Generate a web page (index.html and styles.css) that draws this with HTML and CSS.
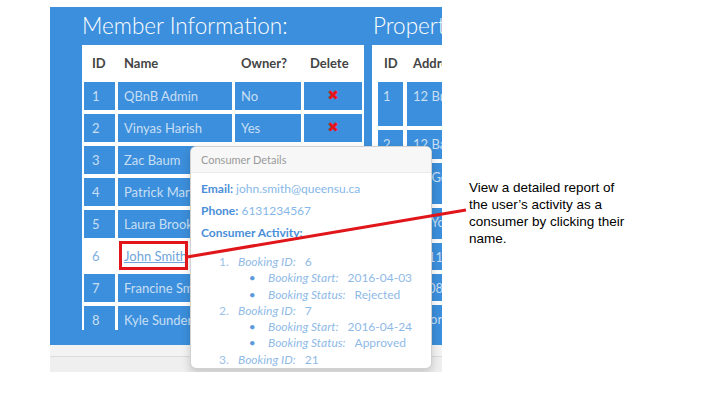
FILE: index.html
```html
<!DOCTYPE html>
<html>
<head>
<meta charset="utf-8">
<link rel="stylesheet" href="styles.css">
</head>
<body>
<div class="slide">
  <div class="shot">
    <div class="app">
      <section class="members">
        <h2 class="title">Member Information:</h2>
        <div class="panel">
          <div class="grid mgrid">
            <div class="th">ID</div><div class="th">Name</div><div class="th">Owner?</div><div class="th">Delete</div>
            <div class="td">1</div><div class="td">QBnB Admin</div><div class="td">No</div><div class="td del">&#10006;</div>
            <div class="td">2</div><div class="td">Vinyas Harish</div><div class="td">Yes</div><div class="td del">&#10006;</div>
            <div class="td">3</div><div class="td">Zac Baum</div><div class="td">No</div><div class="td del">&#10006;</div>
            <div class="td">4</div><div class="td">Patrick Martin</div><div class="td">No</div><div class="td del">&#10006;</div>
            <div class="td">5</div><div class="td">Laura Brooks</div><div class="td">No</div><div class="td del">&#10006;</div>
            <div class="td plain">6</div><div class="td plain"><a class="name-link" href="#">John Smith</a></div><div class="td plain">No</div><div class="td plain"></div>
            <div class="td">7</div><div class="td">Francine Smith</div><div class="td">No</div><div class="td del">&#10006;</div>
            <div class="td">8</div><div class="td">Kyle Sunderland</div><div class="td">No</div><div class="td del">&#10006;</div>
          </div>
        </div>
      </section>
      <section class="props">
        <h2 class="title">Property Information:</h2>
        <div class="panel ppanel">
          <div class="grid pgrid">
            <div class="th">ID</div><div class="th">Address</div>
            <div class="td">1</div><div class="td">12 Brock St Kingston ON</div>
            <div class="td">2</div><div class="td">12 Barrie St</div>
            <div class="td">3</div><div class="td">21 George St Kingston</div>
            <div class="td">4</div><div class="td">19 York St</div>
            <div class="td">5</div><div class="td">2011 Union St</div>
            <div class="td">6</div><div class="td">2008 Alfred St</div>
            <div class="td">7</div><div class="td">4 Lorne St</div>
          </div>
        </div>
      </section>
    </div>
    <div class="footer">
      <div class="footer-top"></div>
      <div class="footer-bottom"></div>
    </div>

    <div class="popover">
      <div class="pop-title">Consumer Details</div>
      <div class="pop-body">
        <p class="pop-line"><b>Email:</b> <span class="pop-val">john.smith@queensu.ca</span></p>
        <p class="pop-line"><b>Phone:</b> <span class="pop-val">6131234567</span></p>
        <p class="pop-line"><b>Consumer Activity:</b></p>
        <ol class="acts">
          <li><em>Booking ID:</em><span class="v">6</span>
            <ul>
              <li><em>Booking Start:</em><span class="v">2016-04-03</span></li>
              <li><em>Booking Status:</em><span class="v">Rejected</span></li>
            </ul>
          </li>
          <li><em>Booking ID:</em><span class="v">7</span>
            <ul>
              <li><em>Booking Start:</em><span class="v">2016-04-24</span></li>
              <li><em>Booking Status:</em><span class="v">Approved</span></li>
            </ul>
          </li>
          <li><em>Booking ID:</em><span class="v">21</span>
            <ul>
              <li><em>Booking Start:</em><span class="v">2016-05-02</span></li>
            </ul>
          </li>
        </ol>
      </div>
    </div>
  </div>

  <div class="callout-box"></div>
  <svg class="callout-line" width="720" height="405" viewBox="0 0 720 405">
    <line x1="187" y1="257" x2="466" y2="210" stroke="#e0161b" stroke-width="3"/>
  </svg>
  <p class="note">View a detailed report of<br>the user’s activity as a<br>consumer by clicking their<br>name.</p>
</div>
</body>
</html>
```
FILE: styles.css
```css
* { box-sizing: border-box; }
html, body { margin: 0; padding: 0; background: #fff; }
body { font-family: Lato, "Open Sans", sans-serif; }

.slide {
  position: relative;
  width: 720px;
  height: 405px;
  overflow: hidden;
  background: #fff;
  padding-top: 7px;
}

.shot {
  position: relative;
  margin-left: 50px;
  width: 392px;
  height: 365px;
  overflow: hidden;
}

.app {
  display: flex;
  gap: 8px;
  height: 338px;
  padding-left: 32px;
  background: #3c8fdc;
  overflow: hidden;
}

.members { flex: 0 0 282px; }
.props { flex: 0 0 220px; }

.title {
  margin: 0;
  height: 38px;
  line-height: 38px;
  font-size: 22.5px;
  font-weight: 300;
  color: #fff;
  white-space: nowrap;
}
.props .title { padding-left: 1px; }

.panel {
  height: 285px;
  overflow: hidden;
  background: #fff;
  padding: 2px;
}
.ppanel { padding: 2px 0 2px 6px; }

.grid {
  display: grid;
  row-gap: 4px;
  font-size: 13px;
}
.mgrid {
  grid-template-columns: 31px 114px 66px 58px;
  grid-template-rows: 31px repeat(8, 28px);
  column-gap: 3px;
}
.pgrid {
  grid-template-columns: 25px 160px;
  grid-template-rows: 31px 44px 29px 41px 31px 27px 27px 26px;
  column-gap: 4px;
}

.th {
  display: flex;
  align-items: center;
  padding-left: 6px;
  font-weight: 700;
  color: #444;
  white-space: nowrap;
}
.mgrid .th:first-child { padding-left: 8px; }

.td {
  background: #3c8fdc;
  color: rgba(255, 255, 255, 0.72);
  padding: 6px 0 0 6px;
  line-height: 16px;
  white-space: nowrap;
  overflow: hidden;
}
.mgrid .td:nth-child(4n+1) { padding-left: 8px; }
.pgrid .td { white-space: normal; }
.pgrid .td:nth-child(2n+1) { padding-left: 5px; }

.td.del {
  text-align: center;
  padding-left: 0;
  padding-top: 5px;
  color: #e4161c;
  font-family: "DejaVu Sans", sans-serif;
  font-size: 14px;
}
.td.plain {
  background: #fff;
  color: #7fb0e0;
}
.name-link {
  color: #6ea4da;
  text-decoration: underline;
}

.footer { height: 27px; }
.footer-top {
  height: 12px;
  background: #f3f3f3;
  border-bottom: 1px solid #dcdcdc;
}
.footer-bottom {
  height: 15px;
  background: #efefef;
}

.popover {
  position: absolute;
  left: 140px;
  top: 139px;
  width: 242px;
  height: 223px;
  background: #fff;
  border: 1px solid rgba(0, 0, 0, 0.18);
  border-radius: 6px;
  box-shadow: 0 4px 10px rgba(0, 0, 0, 0.18);
  overflow: hidden;
}
.pop-title {
  height: 26px;
  line-height: 25px;
  padding: 0 10px;
  font-size: 11px;
  color: #9a9a9a;
  background: #f7f7f7;
  border-bottom: 1px solid #ebebeb;
}
.pop-body {
  padding: 5px 10px 0;
  font-size: 12px;
  color: #8cb8e6;
}
.pop-line {
  margin: 0;
  line-height: 22px;
  color: #4a8fd8;
}
.pop-line b { font-weight: 700; }
.pop-val { color: #86b7e8; }

.acts {
  margin: 10px 0 0;
  padding-left: 37px;
  line-height: 16.3px;
  color: #8fbae7;
}
.acts > li::marker {
  content: counter(list-item) ".\00a0\00a0\00a0";
  color: #9cc2ea;
}
.acts ul {
  margin: 0;
  padding-left: 30px;
}
.acts ul li::marker {
  content: "\2022\00a0\00a0\00a0\00a0";
  color: #5f9bdb;
}
.acts em { font-style: italic; }
.acts .v { margin-left: 9px; }

.callout-box {
  position: absolute;
  left: 119px;
  top: 241px;
  width: 69px;
  height: 29px;
  border: 3px solid #e0161b;
}
.callout-line {
  position: absolute;
  left: 0;
  top: 0;
  pointer-events: none;
}

.note {
  position: absolute;
  left: 469px;
  top: 179px;
  margin: 0;
  font-family: "Liberation Sans", Arial, sans-serif;
  font-size: 13.5px;
  line-height: 17px;
  color: #000;
}
```
